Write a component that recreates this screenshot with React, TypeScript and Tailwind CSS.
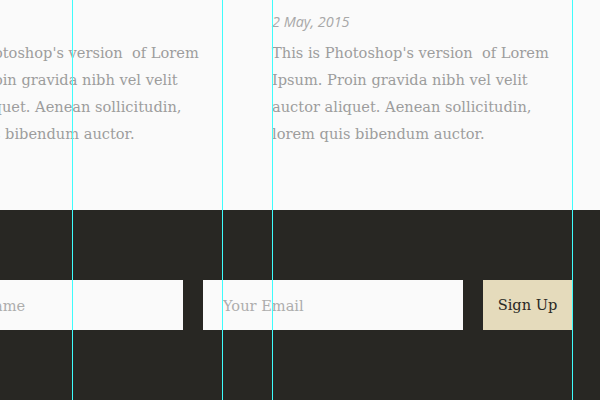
import React from "react";

const serif = "font-['DejaVu_Serif','Liberation_Serif',serif]";

const posts = [
    {date: "2 May, 2015"},
    {date: "2 May, 2015"},
];

function Post({date}: {date: string}) {
    return (
        <div className="w-[300px] shrink-0">
            <p className="font-['Open_Sans',sans-serif] text-[14.4px] italic leading-[20px] text-[#a8a8a8]">{date}</p>
            <p className={`${serif} mt-[7px] text-[14.6px] leading-[27px] text-[#9d9d9d]`}>
                This is Photoshop's version&nbsp; of Lorem Ipsum. Proin gravida nibh vel velit auctor aliquet. Aenean
                sollicitudin, lorem quis bibendum auctor.
            </p>
        </div>
    );
}

export default function App() {
    const guides = ["left-[72px]", "left-[222px]", "left-[272px]", "left-[572px]"];

    return (
        <div className="relative h-[400px] w-[600px] overflow-hidden bg-[#fafafa]">
            <div className="flex h-[210px] flex-col pt-[12px]">
                <div className="ml-[-78px] flex gap-[50px]">
                    {posts.map((p, i) => (
                        <Post key={i} date={p.date}/>
                    ))}
                </div>
            </div>

            <footer className="flex h-[190px] flex-col bg-[#282723] pt-[70px]">
                <form className="ml-[-77px] flex gap-[20px]">
                    <input
                        placeholder="Your Name"
                        className={`${serif} h-[50px] w-[260px] bg-[#fafafa] px-[20px] text-[14.6px] text-[#333] outline-none placeholder:text-[#adadad]`}
                    />
                    <input
                        placeholder="Your Email"
                        className={`${serif} h-[50px] w-[260px] bg-[#fafafa] px-[20px] text-[14.6px] text-[#333] outline-none placeholder:text-[#adadad]`}
                    />
                    <button
                        type="button"
                        className={`${serif} h-[50px] w-[89px] bg-[#e5dbbc] text-[14.6px] text-[#2a2925]`}
                    >
                        Sign Up
                    </button>
                </form>
            </footer>

            {/* layout guides */}
            {guides.map((g) => (
                <div key={g} className={`pointer-events-none absolute top-0 h-full w-px bg-[#3ffcfc] ${g}`}/>
            ))}
        </div>
    );
}
